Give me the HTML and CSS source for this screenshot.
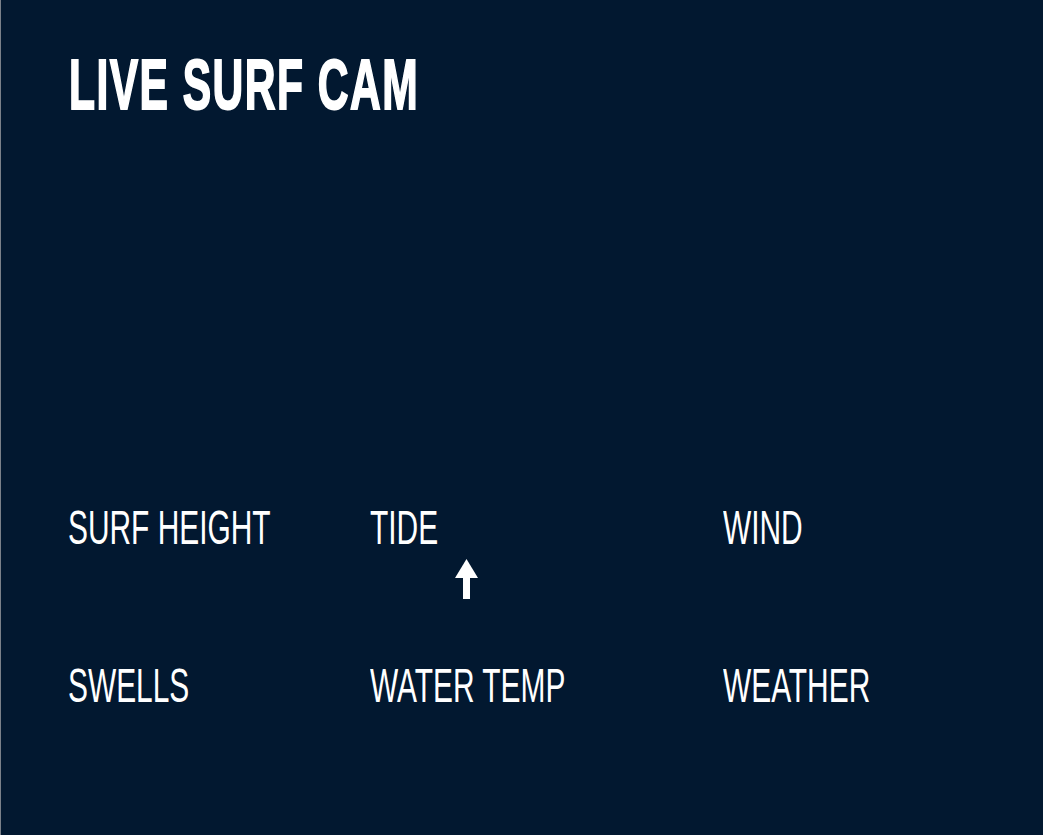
FILE: index.html
```html
<!DOCTYPE html>
<html lang="en">
<head>
<meta charset="utf-8">
<title>Live Surf Cam</title>
<link rel="stylesheet" href="styles.css">
</head>
<body>
<main class="cam">
  <h1 class="title"><span class="squeeze">LIVE SURF CAM</span></h1>
  <section class="conditions">
    <div class="cell">
      <h2 class="label"><span class="squeeze">SURF HEIGHT</span></h2>
    </div>
    <div class="cell">
      <h2 class="label"><span class="squeeze">TIDE</span></h2>
      <div class="tide-dir">
        <svg width="23" height="40" viewBox="0 0 23 40" aria-hidden="true">
          <polygon points="11.5,0 23,19 0,19" fill="#fff"/>
          <rect x="8" y="18" width="7" height="22" fill="#fff"/>
        </svg>
      </div>
    </div>
    <div class="cell">
      <h2 class="label"><span class="squeeze">WIND</span></h2>
    </div>
    <div class="cell">
      <h2 class="label"><span class="squeeze">SWELLS</span></h2>
    </div>
    <div class="cell">
      <h2 class="label"><span class="squeeze">WATER TEMP</span></h2>
    </div>
    <div class="cell">
      <h2 class="label"><span class="squeeze">WEATHER</span></h2>
    </div>
  </section>
</main>
</body>
</html>
```

FILE: styles.css
```css
html, body {
  margin: 0;
  padding: 0;
  height: 100%;
}

body {
  background: #021830;
  color: #ffffff;
  font-family: "Liberation Sans", Arial, sans-serif;
}

.cam {
  box-sizing: border-box;
  min-height: 100%;
  border-left: 1px solid #7a8089;
  padding: 49px 0 0 67px;
}

.squeeze {
  display: inline-block;
  transform-origin: left center;
  white-space: nowrap;
}

.title {
  margin: 0;
  font-size: 71px;
  line-height: 71px;
  font-weight: 700;
}

.title .squeeze {
  -webkit-text-stroke: 2px #ffffff;
  letter-spacing: 2.4px;
  transform: scaleX(0.6);
  margin-left: 1px;
}

.conditions {
  display: grid;
  grid-template-columns: 302px 353px 1fr;
  grid-auto-rows: 158px;
  margin-top: 383px;
}

.cell {
  display: flex;
  flex-direction: column;
}

.label {
  margin: 0;
  font-size: 49px;
  line-height: 49px;
  font-weight: 400;
}

.label .squeeze {
  transform: scaleX(0.61);
}

.tide-dir {
  margin: 7px 0 0 85px;
  display: flex;
}
```
